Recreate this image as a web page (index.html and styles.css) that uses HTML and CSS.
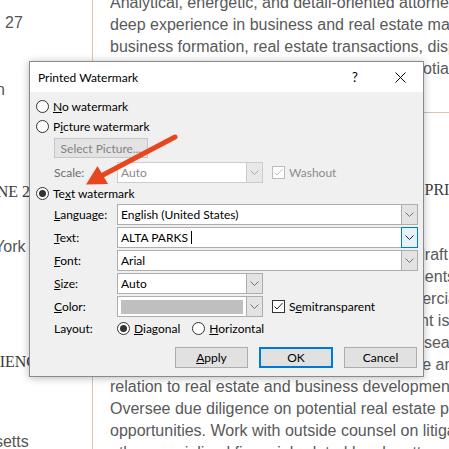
FILE: index.html
```html
<!DOCTYPE html>
<html>
<head>
<meta charset="utf-8">
<link rel="stylesheet" href="styles.css">
</head>
<body>
<div class="page">
  <div class="left">
    <div class="l l1">27</div>
    <div class="l l2">Boston</div>
    <div class="l l3 serif">JUNE 2017</div>
    <div class="l l4">New York</div>
    <div class="l l5 serif">EXPERIENCE</div>
    <div class="l l6">Massachusetts</div>
  </div>
  <div class="right">
    <div class="para p1">
      <div class="ln">Analytical, energetic, and detail-oriented attorney with</div>
      <div class="ln">deep experience in business and real estate matters, including</div>
      <div class="ln">business formation, real estate transactions, dispute</div>
      <div class="ln">resolution, and contract drafting and the negotiation of</div>
    </div>
    <div class="rule"></div>
    <div class="heading">ASSOCIATE GENERAL COUNSEL, MILTON PRIME REALTY</div>
    <div class="para p2">
      <div class="ln">Manage all legal matters for the Company; draft and</div>
      <div class="ln">negotiate any leases, contracts, and agreements for</div>
      <div class="ln">the acquisition of both residential and commercial</div>
      <div class="ln">property. Confirm every transaction document is</div>
      <div class="ln">compliant with federal laws. Perform legal research and</div>
      <div class="ln">analysis for the executive team on real estate and tax issues in</div>
      <div class="ln">relation to real estate and business development.</div>
      <div class="ln">Oversee due diligence on potential real estate purchase</div>
      <div class="ln">opportunities. Work with outside counsel on litigation and</div>
      <div class="ln">other specialized financial-related legal matters.</div>
    </div>
  </div>
</div>

<div class="dialog">
  <div class="titlebar">
    <div class="title">Printed Watermark</div>
    <div class="tbtn help">?</div>
    <div class="tbtn close">
      <svg width="11" height="11" viewBox="0 0 11 11"><path d="M0.5 0.5L10.5 10.5M10.5 0.5L0.5 10.5" stroke="#000" stroke-width="1" fill="none"/></svg>
    </div>
  </div>
  <div class="body">
    <div class="row"><span class="radio"></span><span><u>N</u>o watermark</span></div>
    <div class="row"><span class="radio"></span><span>P<u>i</u>cture watermark</span></div>
    <div class="indent"><div class="pbtn">Select Picture...</div></div>
    <div class="frow scale-row">
      <span class="lbl dis">Scale:</span>
      <div class="combo small disabled">
        <span class="val">Auto</span>
        <span class="dd"><svg width="9" height="5" viewBox="0 0 9 5"><path d="M0.5 0.5L4.5 4.5L8.5 0.5" fill="none" stroke="#a8a8a8"/></svg></span>
      </div>
      <span class="check disabled"><svg width="11" height="11" viewBox="0 0 11 11"><path d="M1.5 5.5L4 8L9.5 2" fill="none" stroke="#bdbdbd"/></svg></span>
      <span class="dis2">Washout</span>
    </div>
    <div class="row"><span class="radio on"></span><span>Te<u>x</u>t watermark</span></div>
    <div class="frow first">
      <span class="lbl"><u>L</u>anguage:</span>
      <div class="combo full">
        <span class="val">English (United States)</span>
        <span class="dd"><svg width="9" height="5" viewBox="0 0 9 5"><path d="M0.5 0.5L4.5 4.5L8.5 0.5" fill="none" stroke="#707070"/></svg></span>
      </div>
    </div>
    <div class="frow">
      <span class="lbl"><u>T</u>ext:</span>
      <div class="combo full focus">
        <span class="val">ALTA PARKS <span class="caret"></span></span>
        <span class="dd"><svg width="9" height="5" viewBox="0 0 9 5"><path d="M0.5 0.5L4.5 4.5L8.5 0.5" fill="none" stroke="#222"/></svg></span>
      </div>
    </div>
    <div class="frow">
      <span class="lbl"><u>F</u>ont:</span>
      <div class="combo full">
        <span class="val">Arial</span>
        <span class="dd"><svg width="9" height="5" viewBox="0 0 9 5"><path d="M0.5 0.5L4.5 4.5L8.5 0.5" fill="none" stroke="#707070"/></svg></span>
      </div>
    </div>
    <div class="frow">
      <span class="lbl"><u>S</u>ize:</span>
      <div class="combo small">
        <span class="val">Auto</span>
        <span class="dd"><svg width="9" height="5" viewBox="0 0 9 5"><path d="M0.5 0.5L4.5 4.5L8.5 0.5" fill="none" stroke="#707070"/></svg></span>
      </div>
    </div>
    <div class="frow">
      <span class="lbl"><u>C</u>olor:</span>
      <div class="combo small">
        <span class="swatch"></span>
        <span class="dd"><svg width="9" height="5" viewBox="0 0 9 5"><path d="M0.5 0.5L4.5 4.5L8.5 0.5" fill="none" stroke="#707070"/></svg></span>
      </div>
      <span class="check"><svg width="11" height="11" viewBox="0 0 11 11"><path d="M1.5 5.5L4 8L9.5 2" fill="none" stroke="#222"/></svg></span>
      <span>S<u>e</u>mitransparent</span>
    </div>
    <div class="frow layout-row">
      <span class="lbl">Layout:</span>
      <span class="radio on"></span><span><u>D</u>iagonal</span>
      <span class="radio gap"></span><span><u>H</u>orizontal</span>
    </div>
    <div class="buttons">
      <div class="btn"><span><u>A</u>pply</span></div>
      <div class="btn default">OK</div>
      <div class="btn">Cancel</div>
    </div>
  </div>
</div>

<svg class="arrow" width="449" height="449" viewBox="0 0 449 449">
  <line x1="175" y1="137" x2="102" y2="175.5" stroke="#e8461f" stroke-width="5" stroke-linecap="round"/>
  <polygon points="86,184.5 97.5,166 108,184" fill="#e8461f"/>
</svg>
</body>
</html>
```

FILE: styles.css
```css
body {
  margin: 0;
  width: 449px;
  height: 449px;
  overflow: hidden;
  position: relative;
  background: #ffffff;
  font-family: "Liberation Sans", Arial, sans-serif;
}

.page {
  display: grid;
  grid-template-columns: 93px 1fr;
  height: 449px;
}

.left {
  box-sizing: border-box;
  border-right: 1px solid #d9c5b1;
  overflow: hidden;
  font-size: 16px;
  line-height: 22px;
  color: #555555;
  white-space: nowrap;
}

.l { height: 22px; }
.l1 { margin-top: 12px; margin-left: 5px; }
.l2 { margin-top: 45px; margin-left: -45px; }
.l3 { margin-top: 80px; margin-left: -21px; }
.l4 { margin-top: 33px; margin-left: -42px; }
.l5 { margin-top: 93px; margin-left: -51px; }
.l6 { margin-top: 58px; margin-left: -78px; }

.serif {
  font-family: "Liberation Serif", "Times New Roman", serif;
  color: #3a3a3a;
}

.right {
  padding-left: 17px;
  overflow: hidden;
  font-size: 16px;
  line-height: 22px;
  color: #595959;
  white-space: nowrap;
}

.ln { height: 22px; }

.p1 { margin-top: -8px; }

.rule {
  margin-top: 32px;
  border-top: 1px solid #d9c5b1;
  margin-left: -17px;
}

.heading {
  margin-top: 66px;
  height: 22px;
  font-family: "Liberation Serif", "Times New Roman", serif;
  color: #3a3a3a;
}

.p2 { margin-top: 43px; }

/* Dialog */
.dialog {
  position: absolute;
  left: 29px;
  top: 61px;
  width: 395px;
  height: 316px;
  box-sizing: border-box;
  border: 1px solid #8a8a8a;
  background: #f0f0f0;
  box-shadow: 0 1px 8px rgba(0, 0, 0, 0.28);
  font-family: Lato, "Noto Sans", sans-serif;
  font-size: 12px;
  color: #000000;
  display: flex;
  flex-direction: column;
}

.titlebar {
  height: 30px;
  background: #ffffff;
  display: flex;
  align-items: center;
}

.title {
  flex: 1;
  padding-left: 8px;
}

.tbtn {
  height: 30px;
  display: flex;
  align-items: center;
  justify-content: center;
}
.help { width: 46px; font-size: 13px; }
.close { width: 45px; }

.body {
  padding: 4px 5px 8px 6px;
  display: flex;
  flex-direction: column;
}

.row {
  display: flex;
  align-items: center;
  height: 20px;
}

.radio {
  width: 13px;
  height: 13px;
  box-sizing: border-box;
  border: 1px solid #333333;
  border-radius: 50%;
  background: #ffffff;
  margin-right: 4px;
  display: flex;
  align-items: center;
  justify-content: center;
  flex: none;
}
.radio.on::after {
  content: "";
  width: 7px;
  height: 7px;
  border-radius: 50%;
  background: #333333;
}
.radio.gap { margin-left: 12px; }

.indent { margin-left: 18px; margin-top: 2px; }

.pbtn {
  width: 94px;
  height: 20px;
  box-sizing: border-box;
  border: 1px solid #c6c6c6;
  background: #e3e3e3;
  color: #838383;
  display: flex;
  align-items: center;
  justify-content: center;
}

.frow {
  display: flex;
  align-items: center;
  height: 21px;
  margin-left: 18px;
  margin-top: 2px;
}
.scale-row { margin-top: 4px; }
.frow.first { margin-top: 1px; }
.layout-row { height: 20px; margin-top: 1px; }

.lbl { width: 63px; flex: none; }
.dis { color: #6d6d6d; }
.dis2 { color: #8d8d8d; }

.combo {
  display: flex;
  height: 21px;
  box-sizing: border-box;
  border: 1px solid #adadad;
  background: #ffffff;
  flex: none;
}
.combo.full { width: 301px; }
.combo.small { width: 146px; }
.combo.disabled { border-color: #cccccc; color: #8a8a8a; }

.val {
  flex: 1;
  padding-left: 3px;
  line-height: 19px;
  white-space: nowrap;
  overflow: hidden;
  display: flex;
  align-items: center;
}

.caret {
  display: inline-block;
  width: 1px;
  height: 13px;
  background: #000000;
  margin-left: 3px;
}

.dd {
  width: 17px;
  height: 21px;
  margin: -1px -1px -1px 0;
  box-sizing: border-box;
  border: 1px solid #adadad;
  background: #e3e3e3;
  display: flex;
  align-items: center;
  justify-content: center;
  flex: none;
}
.disabled .dd { border-color: #cccccc; background: #e8e8e8; }
.focus .dd { border-color: #0078d7; background: #e5f1fb; }

.swatch {
  flex: 1;
  margin: 3px 3px 2px 3px;
  background: #bfbfbf;
}

.check {
  width: 13px;
  height: 13px;
  box-sizing: border-box;
  border: 1px solid #333333;
  background: #ffffff;
  margin-left: 9px;
  margin-right: 4px;
  display: flex;
  align-items: center;
  justify-content: center;
  flex: none;
}
.check.disabled { border-color: #bcbcbc; }

.buttons {
  margin-top: 9px;
  display: flex;
  justify-content: flex-end;
  gap: 11px;
  margin-right: 1px;
}

.btn {
  width: 73px;
  height: 21px;
  box-sizing: border-box;
  border: 1px solid #adadad;
  background: #e1e1e1;
  display: flex;
  align-items: center;
  justify-content: center;
}
.btn.default { border: 2px solid #0078d7; width: 74px; }

.arrow {
  position: absolute;
  left: 0;
  top: 0;
  pointer-events: none;
}
```
